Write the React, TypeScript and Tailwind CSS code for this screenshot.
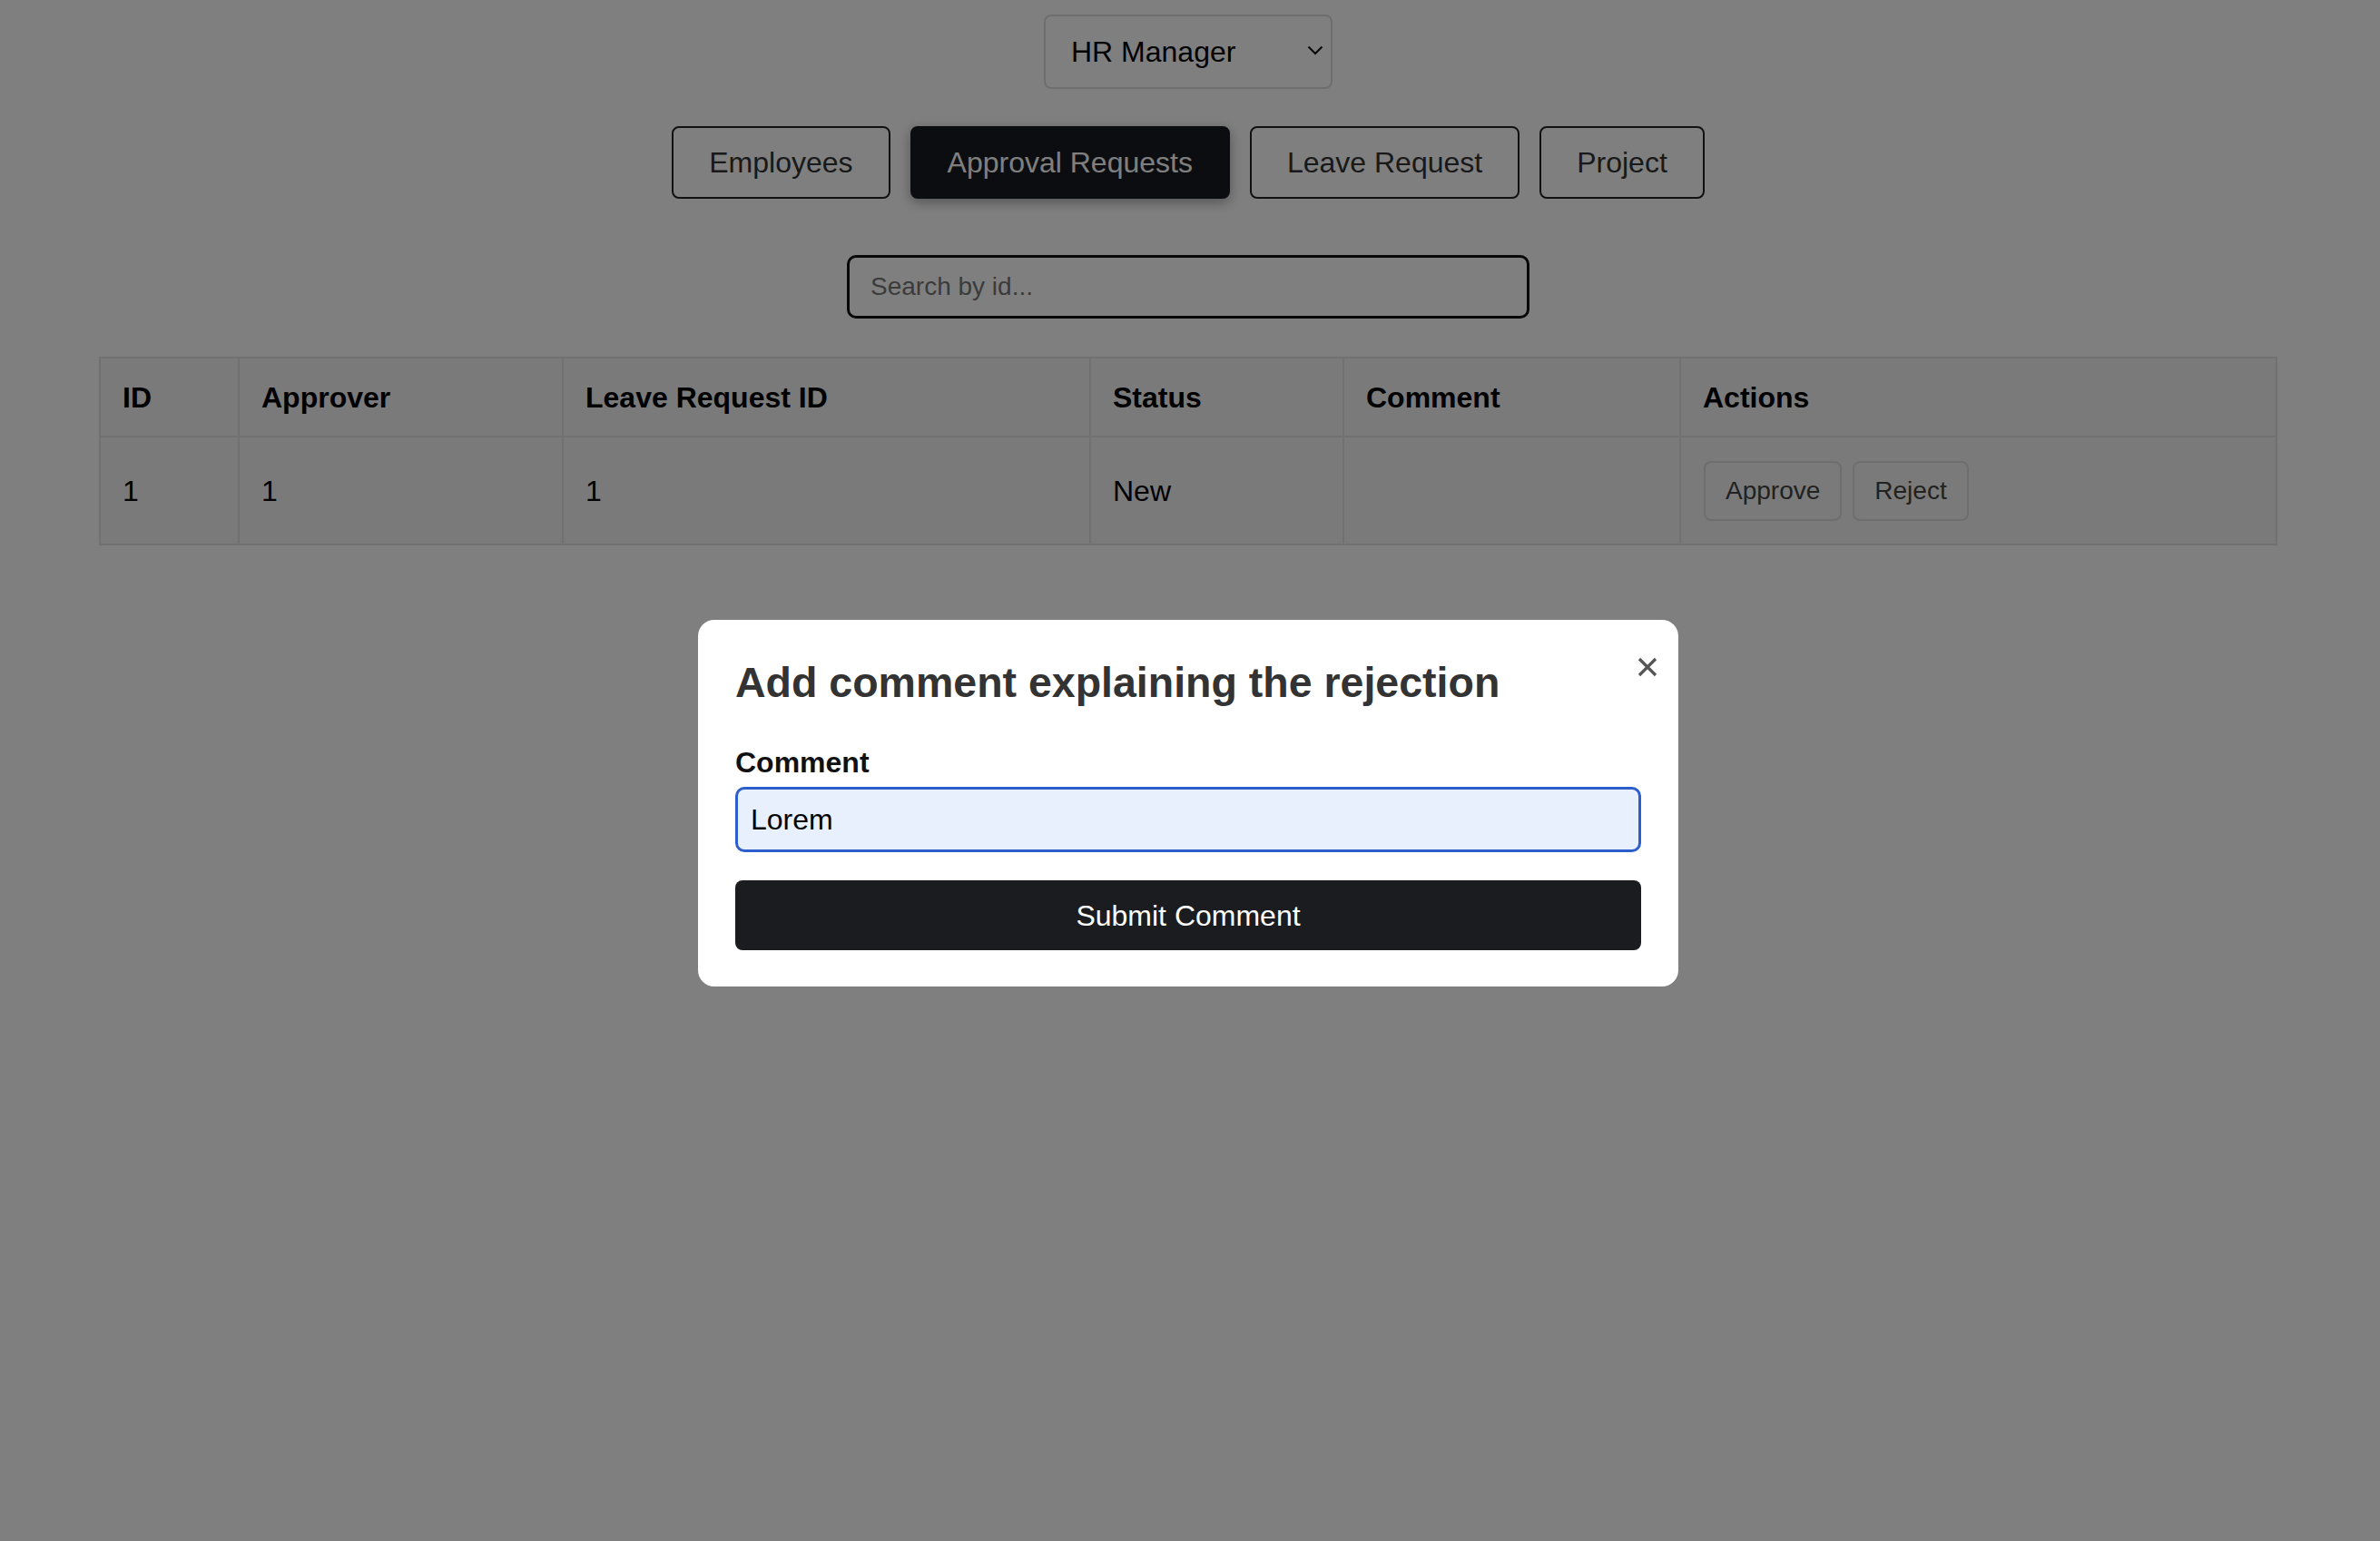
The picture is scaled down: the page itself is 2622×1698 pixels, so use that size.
import React from "react";

const cols = [
  { label: "ID", w: "w-[153px]" },
  { label: "Approver", w: "w-[357px]" },
  { label: "Leave Request ID", w: "w-[581px]" },
  { label: "Status", w: "w-[279px]" },
  { label: "Comment", w: "w-[371px]" },
  { label: "Actions", w: "w-[657px]" },
];

export default function App() {
  return (
    <div className="relative min-h-screen bg-white font-['Liberation_Sans',Arial,sans-serif] text-black">
      <div className="flex flex-col items-center pr-[4px] pt-[16px]">
        {/* Role select */}
        <div className="relative flex h-[82px] w-[318px] items-center rounded-[8px] border-2 border-[#dcdcdc] bg-white pl-[28px] text-[32px] text-black">
          <span>HR Manager</span>
          <svg
            className="absolute right-[8px] top-[32px]"
            width="18"
            height="11"
            viewBox="0 0 18 11"
            fill="none"
          >
            <path d="M1.5 1.5 L9 9 L16.5 1.5" stroke="#111" strokeWidth="2" />
          </svg>
        </div>

        {/* Tabs */}
        <div className="mt-[41px] flex gap-[22px]">
          <button className="h-[80px] rounded-[8px] border-2 border-[#222] bg-white px-[39px] text-[32px] text-[#333]">
            Employees
          </button>
          <button className="h-[80px] rounded-[8px] border-2 border-[#181a20] bg-[#181a20] px-[39px] text-[32px] text-white shadow-[0_4px_14px_rgba(0,0,0,0.35)]">
            Approval Requests
          </button>
          <button className="h-[80px] rounded-[8px] border-2 border-[#222] bg-white px-[39px] text-[32px] text-[#333]">
            Leave Request
          </button>
          <button className="h-[80px] rounded-[8px] border-2 border-[#222] bg-white px-[39px] text-[32px] text-[#333]">
            Project
          </button>
        </div>

        {/* Search */}
        <div className="mt-[62px] flex h-[70px] w-[752px] items-center rounded-[10px] border-[3px] border-[#111] bg-white pl-[23px] text-[28px] text-[#777]">
          Search by id...
        </div>

        {/* Table */}
        <table className="mt-[42px] w-[2398px] table-fixed border-collapse border-2 border-[#d6d6d6] bg-[#f4f4f4] text-[32px]">
          <thead>
            <tr className="h-[87px]">
              {cols.map((c) => (
                <th
                  key={c.label}
                  className={`${c.w} border-2 border-[#e2e2e2] px-[24px] text-left font-bold`}
                >
                  {c.label}
                </th>
              ))}
            </tr>
          </thead>
          <tbody>
            <tr className="h-[119px]">
              <td className="border-2 border-[#e2e2e2] px-[24px]">1</td>
              <td className="border-2 border-[#e2e2e2] px-[24px]">1</td>
              <td className="border-2 border-[#e2e2e2] px-[24px]">1</td>
              <td className="border-2 border-[#e2e2e2] px-[24px]">New</td>
              <td className="border-2 border-[#e2e2e2] px-[24px]"></td>
              <td className="border-2 border-[#e2e2e2] px-[25px]">
                <div className="flex gap-[12px]">
                  <button className="h-[66px] rounded-[8px] border-2 border-[#dcdcdc] px-[22px] text-[28px] text-[#444]">
                    Approve
                  </button>
                  <button className="h-[66px] rounded-[8px] border-2 border-[#dcdcdc] px-[22px] text-[28px] text-[#444]">
                    Reject
                  </button>
                </div>
              </td>
            </tr>
          </tbody>
        </table>
      </div>

      {/* Overlay */}
      <div className="fixed inset-0 bg-black/50">
        <div className="flex justify-center pr-[4px] pt-[683px]">
          <div className="relative w-[1080px] rounded-[18px] bg-white px-[41px] pb-[40px] pt-[42px]">
            <button className="absolute right-[22px] top-[40px] flex h-[24px] w-[24px] items-center justify-center">
              <svg width="22" height="22" viewBox="0 0 22 22" fill="none">
                <path d="M2 2 L20 20 M20 2 L2 20" stroke="#555" strokeWidth="3.2" />
              </svg>
            </button>
            <h2 className="text-[46.5px] font-bold leading-[55px] text-[#333]">
              Add comment explaining the rejection
            </h2>
            <div className="mt-[41px] text-[32px] font-bold leading-[38px] text-[#111]">
              Comment
            </div>
            <div className="mt-[8px] flex h-[72px] items-center rounded-[10px] border-[3px] border-[#2c5fcc] bg-[#e8f0fe] pl-[14px] text-[32px] text-black">
              Lorem
            </div>
            <button className="mt-[31px] flex h-[77px] w-full items-center justify-center rounded-[8px] bg-[#1b1c1f] text-[32px] text-white">
              Submit Comment
            </button>
          </div>
        </div>
      </div>
    </div>
  );
}
